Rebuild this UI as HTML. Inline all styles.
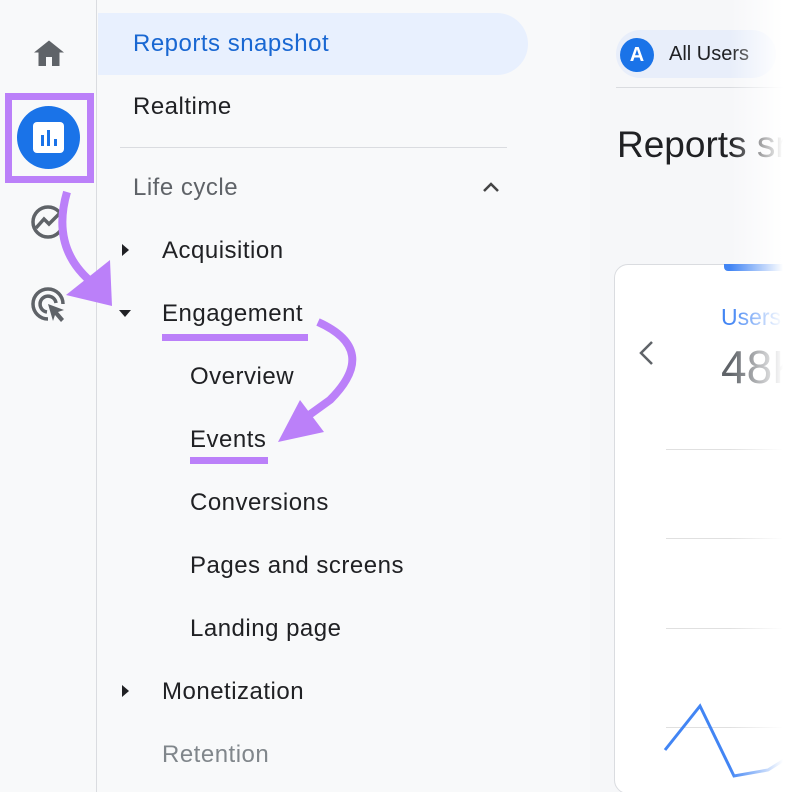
<!DOCTYPE html>
<html><head><style>
*{margin:0;padding:0;box-sizing:border-box}
body{width:789px;height:792px;overflow:hidden;background:#f8f9fa;font-family:"Liberation Sans",sans-serif;position:relative;color:#202124}
.rail{position:absolute;left:0;top:0;width:97px;height:792px;border-right:1px solid #dadce0;background:#f8f9fa}
.nav{position:absolute;left:98px;top:0;width:492px;height:792px;overflow:hidden}
.it{position:absolute;font-size:24px;letter-spacing:0.5px;line-height:30px;white-space:nowrap}
.main{position:absolute;left:590px;top:0;width:199px;height:792px;background:#f6f7f9;overflow:hidden}
.fade{position:absolute;left:730px;top:0;width:59px;height:792px;background:linear-gradient(90deg,rgba(255,255,255,0),#fff 90%)}
.tri{position:absolute;width:0;height:0}
</style></head><body>
<div class="rail">
<svg style="position:absolute;left:31px;top:36px" width="36" height="36" viewBox="0 0 24 24"><path d="M12 3L2 11h3v9h5v-6h4v6h5v-9h3z" fill="#5f6368"/></svg>
<div style="position:absolute;left:5px;top:93px;width:89px;height:90px;border:7px solid #bb80f9"></div>
<div style="position:absolute;left:17px;top:106px;width:63px;height:63px;border-radius:50%;background:#1a73e8"></div>
<div style="position:absolute;left:33px;top:122px;width:31px;height:31px;border-radius:4px;background:#fff"></div>
<div style="position:absolute;left:41px;top:135px;width:3px;height:11px;background:#1a73e8"></div>
<div style="position:absolute;left:47px;top:130px;width:3px;height:16px;background:#1a73e8"></div>
<div style="position:absolute;left:54px;top:139px;width:3px;height:7px;background:#1a73e8"></div>
<svg style="position:absolute;left:30px;top:204px" width="36" height="36" viewBox="0 0 36 36"><circle cx="18" cy="18" r="15" fill="none" stroke="#5f6368" stroke-width="3.5"/><path d="M6 24l8-9 5 5 10-10" fill="none" stroke="#5f6368" stroke-width="3.5"/></svg>
<svg style="position:absolute;left:30px;top:286px" width="40" height="40" viewBox="0 0 40 40"><path d="M18 33A15 15 0 1 1 33 18" fill="none" stroke="#5f6368" stroke-width="3.5"/><path d="M17 26A8 8 0 1 1 26 17" fill="none" stroke="#5f6368" stroke-width="3.5"/><path d="M18 18l16 6-6 2 6 7-3 3-6-7-2 6z" fill="#5f6368"/></svg>
</div>
<div class="nav">
<div style="position:absolute;left:0;top:13px;width:430px;height:62px;border-radius:0 31px 31px 0;background:#e8f0fe"></div>
<div class="it" style="left:35px;top:29px;color:#1967d2">Reports snapshot</div>
<div class="it" style="left:35px;top:92px">Realtime</div>
<div style="position:absolute;left:22px;top:147px;width:387px;height:1px;background:#dadce0"></div>
<div class="it" style="left:35px;top:173px;color:#5f6368">Life cycle</div>
<svg style="position:absolute;left:383px;top:180px" width="20" height="14" viewBox="0 0 20 14"><path d="M3 11l7-7 7 7" fill="none" stroke="#444" stroke-width="2.5"/></svg>
<div class="tri" style="left:24px;top:244px;border-top:6px solid transparent;border-bottom:6px solid transparent;border-left:7px solid #202124"></div>
<div class="it" style="left:64px;top:236px">Acquisition</div>
<div class="tri" style="left:21px;top:310px;border-left:6px solid transparent;border-right:6px solid transparent;border-top:7px solid #202124"></div>
<div class="it" style="left:64px;top:299px">Engagement</div>
<div style="position:absolute;left:64px;top:334px;width:146px;height:7px;background:#bb80f9"></div>
<div class="it" style="left:92px;top:362px">Overview</div>
<div class="it" style="left:92px;top:425px">Events</div>
<div style="position:absolute;left:92px;top:457px;width:78px;height:7px;background:#bb80f9"></div>
<div class="it" style="left:92px;top:488px">Conversions</div>
<div class="it" style="left:92px;top:551px">Pages and screens</div>
<div class="it" style="left:92px;top:614px">Landing page</div>
<div class="tri" style="left:24px;top:685px;border-top:6px solid transparent;border-bottom:6px solid transparent;border-left:7px solid #202124"></div>
<div class="it" style="left:64px;top:677px">Monetization</div>
<div class="it" style="left:64px;top:740px;color:#80868b">Retention</div>
</div>
<svg style="position:absolute;left:0;top:0" width="400" height="460" viewBox="0 0 400 460">
<path d="M67 192Q50 250 95 285" fill="none" stroke="#bb80f9" stroke-width="8"/>
<path d="M66 295L110 260L112 306z" fill="#bb80f9"/>
<path d="M318 322Q380 350 330 400L305 418" fill="none" stroke="#bb80f9" stroke-width="8"/>
<path d="M278 442L300 400L324 432z" fill="#bb80f9"/>
</svg>
<div class="main">
<div style="position:absolute;left:26px;top:30px;width:160px;height:48px;border-radius:24px;background:#e8eefa"></div>
<div style="position:absolute;left:30px;top:38px;width:34px;height:34px;border-radius:50%;background:#1a73e8;color:#fff;font-weight:bold;font-size:20px;text-align:center;line-height:34px">A</div>
<div style="position:absolute;left:79px;top:43px;font-size:20px;white-space:nowrap">All Users</div>
<div style="position:absolute;left:26px;top:87px;width:173px;height:1px;background:#dadce0"></div>
<div style="position:absolute;left:27px;top:124px;font-size:37px;color:#202124;white-space:nowrap">Reports snapshot</div>
<div style="position:absolute;left:24px;top:264px;width:200px;height:530px;border:1px solid #dadce0;border-radius:14px;background:#fff"></div>
<div style="position:absolute;left:134px;top:264px;width:80px;height:7px;border-radius:0 0 4px 4px;background:#4285f4"></div>
<div style="position:absolute;left:131px;top:304px;font-size:23px;color:#4285f4">Users</div>
<div style="position:absolute;left:131px;top:340px;font-size:46px;color:#5f6368">48K</div>
<svg style="position:absolute;left:46px;top:340px" width="20" height="26" viewBox="0 0 20 26"><path d="M16 2L5 13l11 11" fill="none" stroke="#5f6368" stroke-width="2.5"/></svg>
<div style="position:absolute;left:76px;top:449px;width:123px;height:1px;background:#e0e0e0"></div>
<div style="position:absolute;left:76px;top:538px;width:123px;height:1px;background:#e0e0e0"></div>
<div style="position:absolute;left:76px;top:628px;width:123px;height:1px;background:#e0e0e0"></div>
<div style="position:absolute;left:76px;top:727px;width:123px;height:1px;background:#e0e0e0"></div>
<svg style="position:absolute;left:72px;top:700px" width="127" height="80"><path d="M3 50L38 6L72 76L106 70L130 55" fill="none" stroke="#4285f4" stroke-width="3"/></svg>
</div>
<div class="fade"></div>
</body></html>
